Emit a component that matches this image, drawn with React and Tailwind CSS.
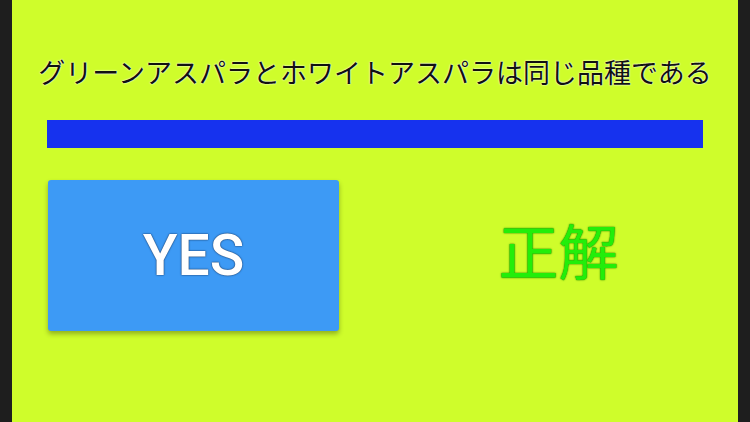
export default function App() {
  return (
    <div className="flex h-[422px] w-[750px] bg-[#1e1e1e]">
      <div className="ml-[12px] mr-[12px] flex-1 bg-[#cffd2b]">
        <h1 className="pt-[58px] text-center font-['Noto_Sans_CJK_JP',sans-serif] text-[27px] leading-[27px] font-normal text-[#111] [text-shadow:0_0_2px_#fff,0_0_1px_#fff]">
          グリーンアスパラとホワイトアスパラは同じ品種である
        </h1>

        <div className="mx-[35px] mt-[35px] h-[28px] bg-[#1632ee]" />

        <div className="mt-[32px] grid grid-cols-2">
          <div className="flex justify-center">
            <button className="flex h-[151px] w-[291px] items-center justify-center rounded-[3px] bg-[#3d9af5] shadow-[0_3px_5px_rgba(0,0,0,0.3)]">
              <span className="font-['Roboto',sans-serif] text-[57px] leading-none font-medium text-white [text-shadow:0_0_2px_#1a3a66,0_0_1px_#1a3a66]">
                YES
              </span>
            </button>
          </div>
          <div className="flex items-center justify-center pb-[13px] pl-[4px]">
            <span className="font-['Noto_Sans_CJK_JP',sans-serif] text-[60px] leading-none font-normal text-[#22ee0a] [text-shadow:0_0_2px_#2a8a00,0_0_1px_#2a8a00]">
              正解
            </span>
          </div>
        </div>
      </div>
    </div>
  );
}
